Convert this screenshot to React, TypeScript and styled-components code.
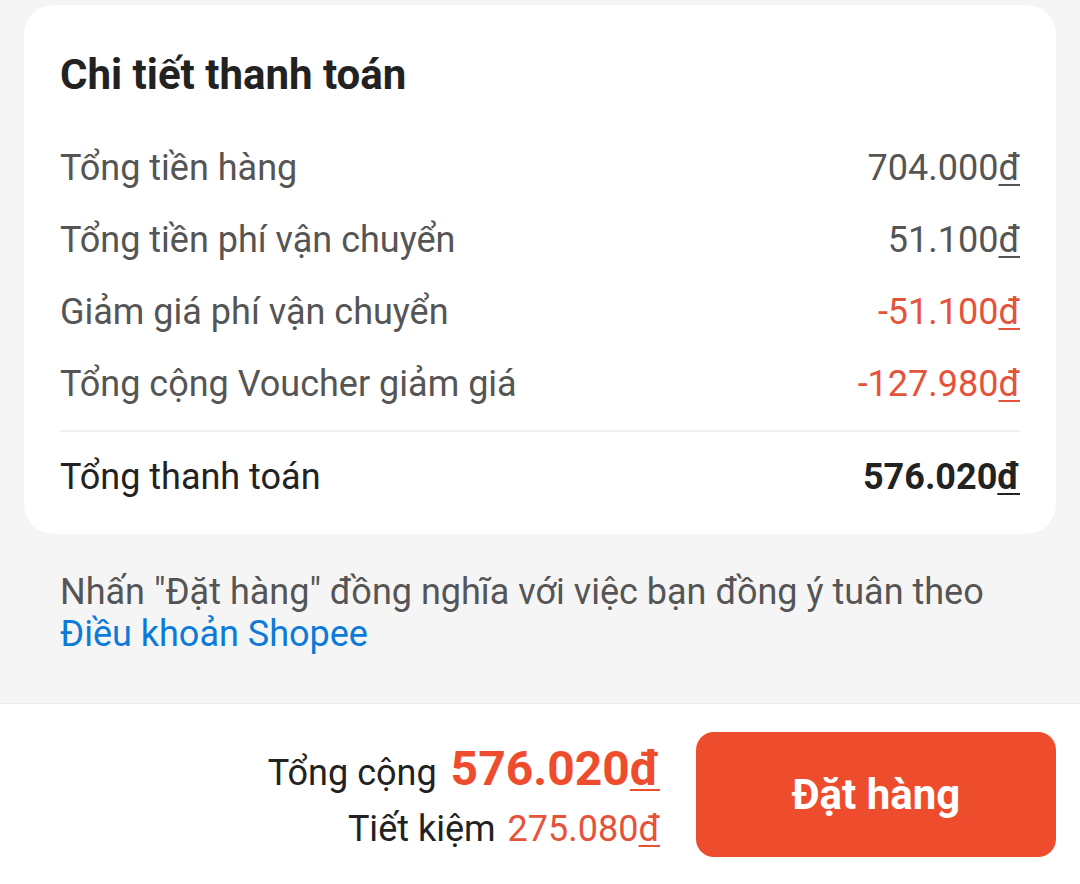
import styled, { createGlobalStyle } from "styled-components";

const GlobalStyle = createGlobalStyle`
  html, body {
    margin: 0;
    padding: 0;
    background: #f5f5f5;
    font-family: Roboto, "Noto Sans", "Liberation Sans", sans-serif;
  }
`;

const Page = styled.div`
  width: 1080px;
  height: 884px;
  display: flex;
  flex-direction: column;
  overflow: hidden;
`;

const Content = styled.div`
  flex: 1;
  padding: 5px 24px 0;
`;

const Card = styled.section`
  background: #fff;
  border-radius: 30px;
  padding: 45px 36px 21px;
`;

const Title = styled.h2`
  margin: 0 0 32px;
  font-size: 42px;
  line-height: 50px;
  font-weight: 700;
  color: #222;
`;

const Row = styled.div<{ $strong?: boolean }>`
  height: 72px;
  display: flex;
  align-items: center;
  justify-content: space-between;
  font-size: 36px;
  color: ${(p) => (p.$strong ? "#222" : "#555")};
`;

const Amount = styled.span<{ $tone?: "red" | "dark"; $bold?: boolean }>`
  color: ${(p) => (p.$tone === "red" ? "#e5533a" : p.$tone === "dark" ? "#222" : "#555")};
  font-weight: ${(p) => (p.$bold ? 700 : 400)};
`;

const Dong = styled.span`
  text-decoration: underline;
  text-underline-offset: 4px;
  text-decoration-thickness: 2px;
`;

const Divider = styled.hr`
  border: 0;
  height: 2px;
  background: #f0f0f0;
  margin: 10px 0 9px;
`;

const Note = styled.p`
  margin: 37px 36px 0;
  font-size: 36px;
  line-height: 42px;
  color: #555;
`;

const Link = styled.a`
  color: #0b7ad9;
  text-decoration: none;
  white-space: nowrap;
`;

const BottomBar = styled.footer`
  height: 181px;
  box-sizing: border-box;
  background: #fff;
  border-top: 1px solid #ebebeb;
  padding: 28px 24px 27px;
  display: flex;
  justify-content: flex-end;
  align-items: stretch;
  gap: 36px;
`;

const Totals = styled.div`
  display: flex;
  flex-direction: column;
  align-items: flex-end;
  justify-content: center;
  padding-top: 6px;
`;

const TotalLine = styled.div`
  display: flex;
  align-items: baseline;
  gap: 14px;
  font-size: 36px;
  color: #222;
  line-height: 58px;
`;

const BigPrice = styled.span`
  font-size: 48px;
  font-weight: 700;
  color: #ee4d2d;
`;

const SaveLine = styled.div`
  display: flex;
  align-items: baseline;
  gap: 12px;
  font-size: 36px;
  color: #222;
  line-height: 54px;
`;

const SavePrice = styled.span`
  color: #e5533a;
`;

const OrderButton = styled.button`
  width: 360px;
  border: 0;
  border-radius: 18px;
  background: #ee4d2d;
  color: #fff;
  font-family: inherit;
  font-size: 42px;
  font-weight: 700;
  cursor: pointer;
`;

type Line = { label: string; value: string; red?: boolean };

const lines: Line[] = [
  { label: "Tổng tiền hàng", value: "704.000" },
  { label: "Tổng tiền phí vận chuyển", value: "51.100" },
  { label: "Giảm giá phí vận chuyển", value: "-51.100", red: true },
  { label: "Tổng cộng Voucher giảm giá", value: "-127.980", red: true },
];

export default function App() {
  return (
    <Page>
      <GlobalStyle />
      <Content>
        <Card>
          <Title>Chi tiết thanh toán</Title>
          {lines.map((l) => (
            <Row key={l.label}>
              <span>{l.label}</span>
              <Amount $tone={l.red ? "red" : undefined}>
                {l.value}
                <Dong>đ</Dong>
              </Amount>
            </Row>
          ))}
          <Divider />
          <Row $strong>
            <span>Tổng thanh toán</span>
            <Amount $tone="dark" $bold>
              576.020<Dong>đ</Dong>
            </Amount>
          </Row>
        </Card>
        <Note>
          Nhấn "Đặt hàng" đồng nghĩa với việc bạn đồng ý tuân theo{" "}
          <Link href="#">Điều khoản Shopee</Link>
        </Note>
      </Content>
      <BottomBar>
        <Totals>
          <TotalLine>
            Tổng cộng
            <BigPrice>
              576.020<Dong>đ</Dong>
            </BigPrice>
          </TotalLine>
          <SaveLine>
            Tiết kiệm
            <SavePrice>
              275.080<Dong>đ</Dong>
            </SavePrice>
          </SaveLine>
        </Totals>
        <OrderButton>Đặt hàng</OrderButton>
      </BottomBar>
    </Page>
  );
}
